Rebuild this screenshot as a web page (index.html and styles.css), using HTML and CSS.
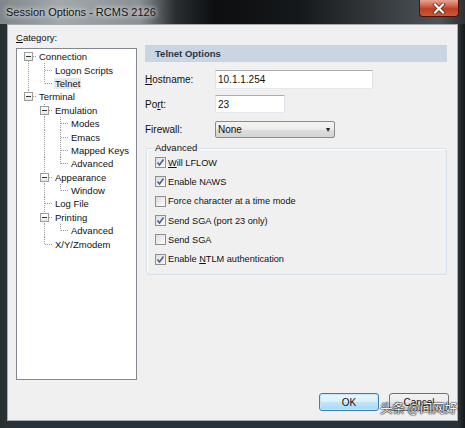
FILE: index.html
```html
<!DOCTYPE html>
<html>
<head>
<meta charset="utf-8">
<title>Session Options</title>
<link rel="stylesheet" href="styles.css">
</head>
<body>
<div class="window">
  <div class="titlebar">
    <span class="title">Session Options - RCMS 2126</span>
    <span class="close">
      <svg width="14" height="11" viewBox="0 0 14 11"><path d="M3 1.5 L11 9.5 M11 1.5 L3 9.5" stroke="#5a1a10" stroke-width="3.6" stroke-linecap="square"/><path d="M3 1.5 L11 9.5 M11 1.5 L3 9.5" stroke="#fff" stroke-width="2.2" stroke-linecap="square"/></svg>
    </span>
  </div>
  <div class="client">
    <div class="main">
      <div class="left">
        <div class="cat-label"><u>C</u>ategory:</div>
        <div class="tree">
          <div class="row"><span class="cell bl"><span class="exp"></span></span><span class="txt">Connection</span></div>
          <div class="row"><span class="cell v"></span><span class="cell t"></span><span class="txt">Logon Scripts</span></div>
          <div class="row"><span class="cell v"></span><span class="cell l"></span><span class="txt sel">Telnet</span></div>
          <div class="row"><span class="cell l"><span class="exp"></span></span><span class="txt">Terminal</span></div>
          <div class="row"><span class="cell"></span><span class="cell t"><span class="exp"></span></span><span class="txt">Emulation</span></div>
          <div class="row"><span class="cell"></span><span class="cell v"></span><span class="cell t"></span><span class="txt">Modes</span></div>
          <div class="row"><span class="cell"></span><span class="cell v"></span><span class="cell t"></span><span class="txt">Emacs</span></div>
          <div class="row"><span class="cell"></span><span class="cell v"></span><span class="cell t"></span><span class="txt">Mapped Keys</span></div>
          <div class="row"><span class="cell"></span><span class="cell v"></span><span class="cell l"></span><span class="txt">Advanced</span></div>
          <div class="row"><span class="cell"></span><span class="cell t"><span class="exp"></span></span><span class="txt">Appearance</span></div>
          <div class="row"><span class="cell"></span><span class="cell v"></span><span class="cell l"></span><span class="txt">Window</span></div>
          <div class="row"><span class="cell"></span><span class="cell t"></span><span class="txt">Log File</span></div>
          <div class="row"><span class="cell"></span><span class="cell t"><span class="exp"></span></span><span class="txt">Printing</span></div>
          <div class="row"><span class="cell"></span><span class="cell v"></span><span class="cell l"></span><span class="txt">Advanced</span></div>
          <div class="row"><span class="cell"></span><span class="cell l"></span><span class="txt">X/Y/Zmodem</span></div>
        </div>
      </div>
      <div class="right">
        <div class="header">Telnet Options</div>
        <div class="field f-host"><span class="flabel"><u>H</u>ostname:</span><span class="input w-host">10.1.1.254</span></div>
        <div class="field f-port"><span class="flabel">Po<u>r</u>t:</span><span class="input w-port">23</span></div>
        <div class="field f-fw"><span class="flabel">Firewall:</span><span class="select"><span>None</span><span class="arrow">&#9662;</span></span></div>
        <div class="group">
          <div class="legend">Advanced</div>
          <div class="checks">
            <div class="check"><span class="box on"></span><span><u>W</u>ill LFLOW</span></div>
            <div class="check"><span class="box on"></span><span>Enable NAWS</span></div>
            <div class="check"><span class="box"></span><span>Force character at a time mode</span></div>
            <div class="check"><span class="box on"></span><span>Send SGA (port 23 only)</span></div>
            <div class="check"><span class="box"></span><span>Send SGA</span></div>
            <div class="check"><span class="box on"></span><span>Enable <u>N</u>TLM authentication</span></div>
          </div>
        </div>
      </div>
    </div>
    <div class="buttons">
      <span class="btn default">OK</span>
      <span class="btn">Cancel</span>
    </div>
  </div>
  <div class="watermark">头条 @间网好</div>
</div>
</body>
</html>
```

FILE: styles.css
```css
html, body {
  margin: 0;
  padding: 0;
  background: #1d2226;
  overflow: hidden;
}

.window {
  position: relative;
  width: 465px;
  height: 428px;
  background: linear-gradient(to right, #25302b 0px, #2b3237 6px, #2b3237 458px, #151819 465px);
  font-family: "Liberation Sans", Arial, sans-serif;
  font-size: 10px;
  color: #111;
}

.titlebar {
  height: 24px;
  display: flex;
  align-items: flex-start;
  justify-content: space-between;
  background: linear-gradient(to right, #80878b 0px, #a2a8ab 60px, #8a9094 140px, #2a2e31 175px, #0c0e10 215px, #16191b 300px, #3a3f43 390px, #4d5357 440px, #2b3034 465px);
}

.title {
  margin: 6px 0 0 6px;
  font-size: 11px;
  line-height: 13px;
  color: #151515;
  text-shadow: 0 0 4px #e4e8ea, 0 0 6px #d8dde0;
}

.close {
  width: 40px;
  height: 17px;
  margin-right: 6px;
  box-sizing: border-box;
  border: 1px solid #4a1208;
  border-top: none;
  border-radius: 0 0 4px 4px;
  background: linear-gradient(to bottom, #e8a493 0%, #d4725a 30%, #c23d22 55%, #c95a3c 100%);
  display: flex;
  align-items: center;
  justify-content: center;
}

.client {
  margin-left: 7px;
  width: 451px;
  height: 397px;
  box-sizing: border-box;
  border: 1px solid #a7acb0;
  background: #f0f0f0;
  display: flex;
  flex-direction: column;
}

.main {
  display: flex;
  padding: 6px 0 0 8px;
}

.left {
  width: 121px;
  flex: none;
}

.cat-label {
  height: 14px;
  line-height: 14px;
  font-size: 9.5px;
}

.tree {
  margin-top: 3px;
  height: 332px;
  box-sizing: border-box;
  border: 1px solid #828790;
  background: #fff;
  padding: 1px 0 0 3px;
}

.row {
  display: flex;
  align-items: center;
  height: 13.4px;
  font-size: 9.5px;
}

.cell {
  width: 16px;
  height: 100%;
  flex: none;
  display: flex;
  align-items: center;
}

.v {
  background: repeating-linear-gradient(to bottom, #9a9a9a 0 1px, transparent 1px 2px) 8px 0 / 1px 100% no-repeat;
}

.t {
  background:
    repeating-linear-gradient(to right, #9a9a9a 0 1px, transparent 1px 2px) 9px 50% / 7px 1px no-repeat,
    repeating-linear-gradient(to bottom, #9a9a9a 0 1px, transparent 1px 2px) 8px 0 / 1px 100% no-repeat;
}

.l {
  background:
    repeating-linear-gradient(to right, #9a9a9a 0 1px, transparent 1px 2px) 9px 50% / 7px 1px no-repeat,
    repeating-linear-gradient(to bottom, #9a9a9a 0 1px, transparent 1px 2px) 8px 0 / 1px 50% no-repeat;
}

.bl {
  background:
    repeating-linear-gradient(to right, #9a9a9a 0 1px, transparent 1px 2px) 9px 50% / 7px 1px no-repeat,
    repeating-linear-gradient(to bottom, #9a9a9a 0 1px, transparent 1px 2px) 8px 100% / 1px 50% no-repeat;
}

.exp {
  width: 9px;
  height: 9px;
  margin-left: 4px;
  box-sizing: border-box;
  border: 1px solid #9c9c9c;
  background: linear-gradient(#333, #333) 1px 3px / 5px 1px no-repeat, linear-gradient(#ffffff, #e6e6e6);
}

.txt {
  margin-left: 2px;
  padding: 0 1px;
  line-height: 11px;
  white-space: nowrap;
}

.txt.sel {
  background: #e8e8e8;
}

.right {
  margin: 14px 0 0 8px;
  width: 302px;
}

.header {
  height: 17px;
  line-height: 17px;
  padding-left: 10px;
  background: #c9d5e2;
  color: #2b3744;
  font-weight: bold;
  font-size: 9.5px;
}

.field {
  display: flex;
  align-items: center;
}

.flabel {
  width: 70px;
  flex: none;
}

.f-host { margin-top: 8px; }
.f-port { margin-top: 6px; }
.f-fw { margin-top: 8px; }

.input {
  box-sizing: border-box;
  background: #fff;
  border: 1px solid;
  border-color: #abadb3 #dbdfe6 #e3e9ef #e2e3ea;
  padding-left: 2px;
  display: flex;
  align-items: center;
}

.w-host { width: 158px; height: 19px; }
.w-port { width: 70px; height: 18px; }

.select {
  width: 120px;
  height: 17px;
  box-sizing: border-box;
  border: 1px solid #8a8a8a;
  border-radius: 2px;
  background: linear-gradient(to bottom, #f4f4f4 0%, #ebebeb 50%, #dddddd 51%, #d4d4d4 100%);
  display: flex;
  align-items: center;
  justify-content: space-between;
  padding: 0 4px 0 2px;
}

.arrow {
  font-size: 8px;
  color: #222;
}

.group {
  margin: 10px 0 0 1px;
  width: 301px;
  height: 127px;
  box-sizing: border-box;
  border: 1px solid #d5dfe5;
  border-radius: 3px;
  box-shadow: inset 1px 1px 0 #fff;
}

.legend {
  display: block;
  width: max-content;
  height: 12px;
  line-height: 12px;
  margin: -7px 0 -1px 7px;
  padding: 0 1px;
  background: #f0f0f0;
  font-size: 9.5px;
}

.checks {
  padding-left: 8px;
}

.check {
  height: 19.3px;
  display: flex;
  align-items: center;
  font-size: 9.2px;
  white-space: nowrap;
}

.box {
  width: 11px;
  height: 11px;
  box-sizing: border-box;
  border: 1px solid #8e8f8f;
  background: linear-gradient(135deg, #dcdcdc, #fdfdfd);
  margin-right: 2px;
  flex: none;
}

.box.on {
  background:
    url("data:image/svg+xml;utf8,<svg xmlns='http://www.w3.org/2000/svg' width='9' height='9'><path d='M1.5 4.5 L3.5 7 L7.5 1.5' fill='none' stroke='%234a5f97' stroke-width='1.6'/></svg>") center / 9px 9px no-repeat,
    linear-gradient(135deg, #dcdcdc, #fdfdfd);
}

.buttons {
  display: flex;
  justify-content: flex-end;
  gap: 10px;
  margin-top: 13px;
  padding-right: 8px;
}

.btn {
  width: 60px;
  height: 18px;
  box-sizing: border-box;
  border: 1px solid #707070;
  border-radius: 3px;
  background: linear-gradient(to bottom, #f2f2f2 0%, #ebebeb 50%, #dddddd 51%, #cfcfcf 100%);
  display: flex;
  align-items: center;
  justify-content: center;
  font-size: 10px;
}

.btn.default {
  border-color: #3c7fb1;
  box-shadow: inset 0 0 0 1px #c4e5f6;
  background: linear-gradient(to bottom, #eaf6fd 0%, #d9f0fc 50%, #bee6fd 51%, #a7d9f5 100%);
}

.watermark {
  position: absolute;
  left: 380px;
  top: 399px;
  font-family: "Noto Sans CJK SC", sans-serif;
  font-size: 12.5px;
  line-height: 17px;
  color: #f4f4f4;
  text-shadow: 0 0 1px #000, 0 0 2px #222, 0 0 1px #000;
  white-space: nowrap;
}
```
